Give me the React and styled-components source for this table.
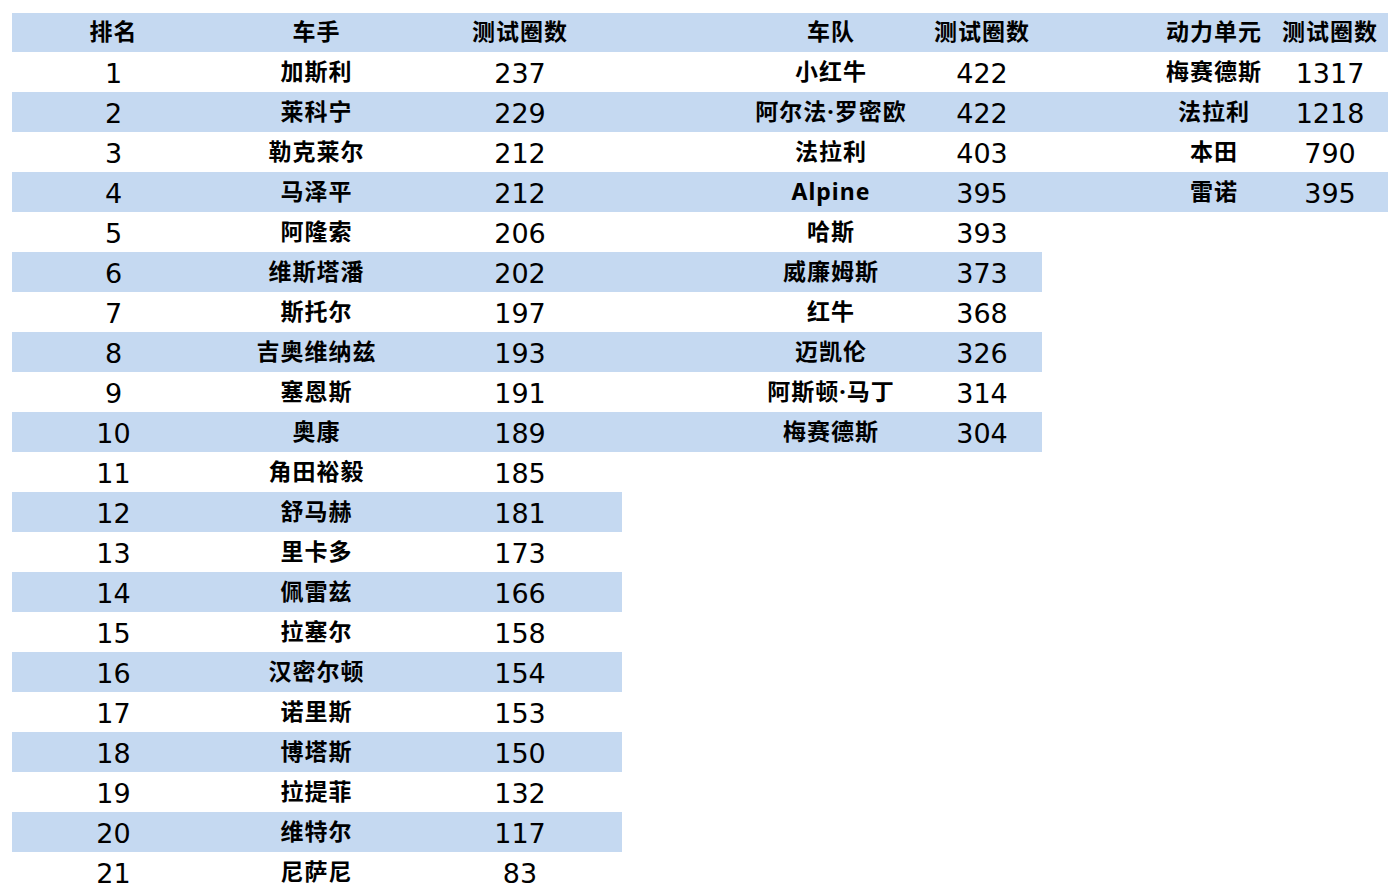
import React from 'react';
import styled, { createGlobalStyle } from 'styled-components';

const drivers = [
  ['1', '加斯利', '237'],
  ['2', '莱科宁', '229'],
  ['3', '勒克莱尔', '212'],
  ['4', '马泽平', '212'],
  ['5', '阿隆索', '206'],
  ['6', '维斯塔潘', '202'],
  ['7', '斯托尔', '197'],
  ['8', '吉奥维纳兹', '193'],
  ['9', '塞恩斯', '191'],
  ['10', '奥康', '189'],
  ['11', '角田裕毅', '185'],
  ['12', '舒马赫', '181'],
  ['13', '里卡多', '173'],
  ['14', '佩雷兹', '166'],
  ['15', '拉塞尔', '158'],
  ['16', '汉密尔顿', '154'],
  ['17', '诺里斯', '153'],
  ['18', '博塔斯', '150'],
  ['19', '拉提菲', '132'],
  ['20', '维特尔', '117'],
  ['21', '尼萨尼', '83'],
];

const teams = [
  ['小红牛', '422'],
  ['阿尔法·罗密欧', '422'],
  ['法拉利', '403'],
  ['Alpine', '395'],
  ['哈斯', '393'],
  ['威廉姆斯', '373'],
  ['红牛', '368'],
  ['迈凯伦', '326'],
  ['阿斯顿·马丁', '314'],
  ['梅赛德斯', '304'],
];

const engines = [
  ['梅赛德斯', '1317'],
  ['法拉利', '1218'],
  ['本田', '790'],
  ['雷诺', '395'],
];

const GlobalStyle = createGlobalStyle`
  html, body {
    margin: 0;
    padding: 0;
    background: #ffffff;
  }
  body {
    font-family: "Noto Sans CJK SC", "Noto Sans", sans-serif;
    color: #000000;
  }
`;

const Page = styled.div`
  padding: 13px 12px 0;
  display: flex;
  align-items: flex-start;
`;

const Table = styled.div`
  display: flex;
  flex-direction: column;
`;

const Row = styled.div`
  display: grid;
  grid-template-columns: ${props => props.$cols};
  height: ${props => (props.$head ? '39px' : '40px')};
  background: ${props => (props.$blue ? '#c5d9f1' : 'transparent')};
  align-items: center;
`;

// latin bits (Alpine, the middle dot) come from Noto Sans, the rest from the CJK face
const Cell = styled.div`
  text-align: center;
  white-space: nowrap;
  font-family: "Noto Sans", "Noto Sans CJK SC", sans-serif;
  font-weight: 700;
  font-size: 23px;
  letter-spacing: 1px;
  line-height: 1;
  padding-bottom: 2px;
`;

const Num = styled.div`
  text-align: center;
  white-space: nowrap;
  font-family: "DejaVu Sans", "Noto Sans", sans-serif;
  font-weight: 400;
  font-size: 27px;
  line-height: 1;
  padding-top: 2px;
`;

const DRIVER_COLS = '203px 203px 204px';
const TEAM_COLS = '118px 182px 120px';
const ENGINE_COLS = '114px 116px 116px';

export default function App() {
  return (
    <>
      <GlobalStyle />
      <Page>
        <Table>
          <Row $cols={DRIVER_COLS} $head $blue>
            <Cell>排名</Cell>
            <Cell>车手</Cell>
            <Cell>测试圈数</Cell>
          </Row>
          {drivers.map(([pos, name, laps], i) => (
            <Row key={pos} $cols={DRIVER_COLS} $blue={i % 2 === 1}>
              <Num>{pos}</Num>
              <Cell>{name}</Cell>
              <Num>{laps}</Num>
            </Row>
          ))}
        </Table>
        <Table>
          <Row $cols={TEAM_COLS} $head $blue>
            <Cell />
            <Cell>车队</Cell>
            <Cell>测试圈数</Cell>
          </Row>
          {teams.map(([name, laps], i) => (
            <Row key={name} $cols={TEAM_COLS} $blue={i % 2 === 1}>
              <Cell />
              <Cell>{name}</Cell>
              <Num>{laps}</Num>
            </Row>
          ))}
        </Table>
        <Table>
          <Row $cols={ENGINE_COLS} $head $blue>
            <Cell />
            <Cell>动力单元</Cell>
            <Cell>测试圈数</Cell>
          </Row>
          {engines.map(([name, laps], i) => (
            <Row key={name} $cols={ENGINE_COLS} $blue={i % 2 === 1}>
              <Cell />
              <Cell>{name}</Cell>
              <Num>{laps}</Num>
            </Row>
          ))}
        </Table>
      </Page>
    </>
  );
}
